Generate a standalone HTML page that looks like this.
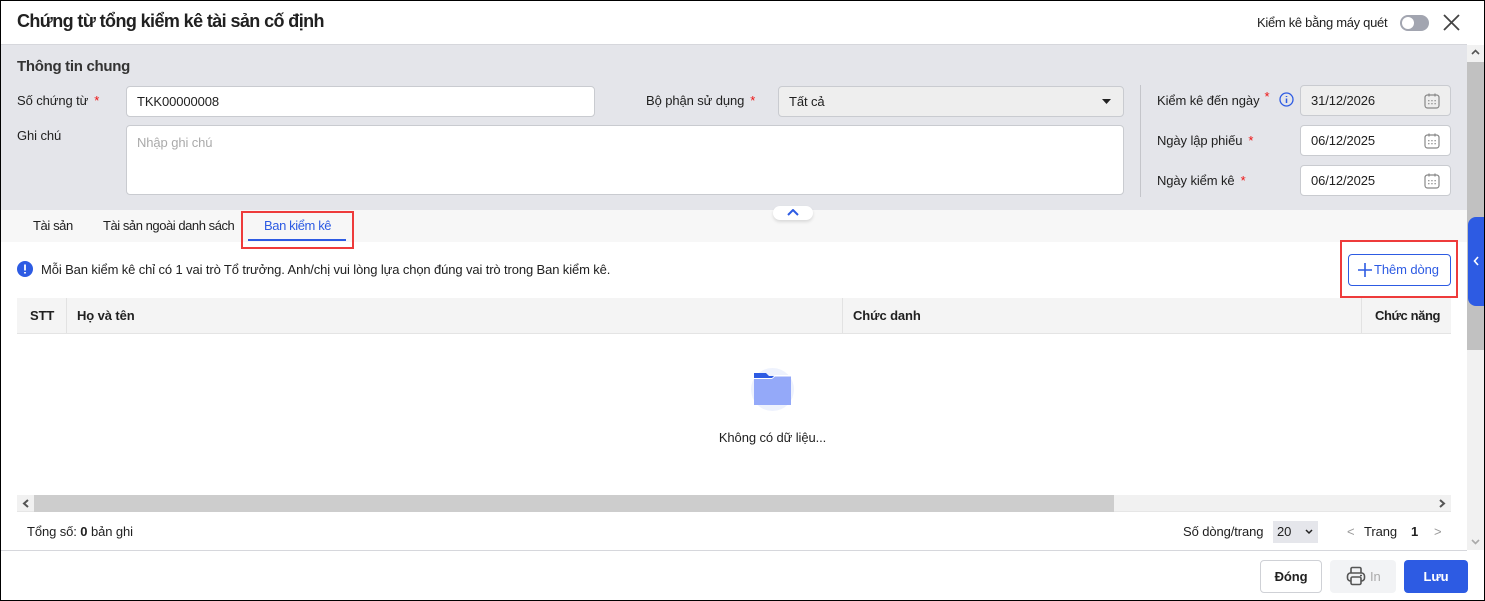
<!DOCTYPE html>
<html><head><meta charset="utf-8">
<style>
*{box-sizing:border-box;margin:0;padding:0}
body{width:1485px;height:601px;overflow:hidden;background:#fff;font-family:"Liberation Sans",Arial,sans-serif;font-size:13px;letter-spacing:-0.1px;color:#212121;position:relative}
.a{position:absolute}
.frame{position:absolute;left:0;top:0;width:1485px;height:601px;border:1px solid #000;pointer-events:none;z-index:50}
.inp{position:absolute;background:#fff;border:1px solid #c9cbd0;border-radius:4px;padding-left:10px;line-height:29px;font-size:13px}
.req{color:#e11;margin-left:6px}
.lbl{position:absolute;font-size:13px}
.cal{position:absolute;right:10px;top:7px;width:16px;height:16px}
</style></head><body>
<div class="frame"></div>
<div class="a" style="left:17px;top:11px;font-size:18px;font-weight:bold;letter-spacing:-0.6px">Chứng từ tổng kiểm kê tài sản cố định</div>
<div class="a" style="left:1257px;top:15px;font-size:13px;letter-spacing:-0.3px">Kiểm kê bằng máy quét</div>
<div class="a" style="left:1400px;top:15px;width:29px;height:16px;border-radius:8px;background:#a2a5b0"><div style="position:absolute;left:2px;top:2px;width:12px;height:12px;border-radius:50%;background:#fff"></div></div>
<svg class="a" style="left:1443px;top:14px" width="17" height="17" viewBox="0 0 17 17"><path d="M1 1L16 16M16 1L1 16" stroke="#444" stroke-width="1.8"/></svg>
<div class="a" style="left:0;top:44px;width:1467px;height:1px;background:#d6d7dc"></div>
<div class="a" style="left:0;top:45px;width:1467px;height:165px;background:#e4e5ea"></div>
<div class="a" style="left:17px;top:58px;font-size:15px;font-weight:bold;color:#333;letter-spacing:-0.3px">Thông tin chung</div>
<div class="lbl" style="left:17px;top:93px">Số chứng từ<span class="req">*</span></div>
<div class="inp" style="left:126px;top:86px;width:469px;height:31px">TKK00000008</div>
<div class="lbl" style="left:17px;top:128px">Ghi chú</div>
<div class="inp" style="left:126px;top:125px;width:998px;height:70px;line-height:34px;color:#aaa">Nhập ghi chú</div>
<div class="lbl" style="left:646px;top:93px">Bộ phận sử dụng<span class="req">*</span></div>
<div class="inp" style="left:778px;top:86px;width:346px;height:31px;background:#eeeeee">Tất cả</div>
<svg class="a" style="left:1102px;top:99px" width="9" height="6"><path d="M0 0H9L4.5 5Z" fill="#222"/></svg>
<div class="a" style="left:1140px;top:85px;width:1px;height:112px;background:#c4c5ca"></div>
<div class="lbl" style="left:1157px;top:93px">Kiểm kê đến ngày<span style="color:#e11;margin-left:5px;position:relative;top:-4px">*</span></div>
<svg class="a" style="left:1279px;top:92px" width="15" height="15" viewBox="0 0 15 15"><circle cx="7.5" cy="7.5" r="6.5" fill="none" stroke="#2d5be3" stroke-width="1.3"/><path d="M7.5 6.5V11M7.5 4V5" stroke="#2d5be3" stroke-width="1.5"/></svg>
<div class="inp" style="left:1300px;top:85px;width:151px;height:31px;background:#eeeeee">31/12/2026<svg class="cal" viewBox="0 0 16 16"><rect x="1" y="2" width="14" height="13" rx="2.5" fill="none" stroke="#888" stroke-width="1.2"/><path d="M5 0.5V3.5M11 0.5V3.5" stroke="#888" stroke-width="1.2"/><g fill="#999"><rect x="4" y="7" width="1.5" height="1.3"/><rect x="7.2" y="7" width="1.5" height="1.3"/><rect x="10.4" y="7" width="1.5" height="1.3"/><rect x="4" y="10" width="1.5" height="1.3"/><rect x="7.2" y="10" width="1.5" height="1.3"/><rect x="10.4" y="10" width="1.5" height="1.3"/></g></svg></div>
<div class="lbl" style="left:1157px;top:133px">Ngày lập phiếu<span class="req">*</span></div>
<div class="inp" style="left:1300px;top:125px;width:151px;height:31px">06/12/2025<svg class="cal" viewBox="0 0 16 16"><rect x="1" y="2" width="14" height="13" rx="2.5" fill="none" stroke="#888" stroke-width="1.2"/><path d="M5 0.5V3.5M11 0.5V3.5" stroke="#888" stroke-width="1.2"/><g fill="#999"><rect x="4" y="7" width="1.5" height="1.3"/><rect x="7.2" y="7" width="1.5" height="1.3"/><rect x="10.4" y="7" width="1.5" height="1.3"/><rect x="4" y="10" width="1.5" height="1.3"/><rect x="7.2" y="10" width="1.5" height="1.3"/><rect x="10.4" y="10" width="1.5" height="1.3"/></g></svg></div>
<div class="lbl" style="left:1157px;top:173px">Ngày kiểm kê<span class="req">*</span></div>
<div class="inp" style="left:1300px;top:165px;width:151px;height:31px">06/12/2025<svg class="cal" viewBox="0 0 16 16"><rect x="1" y="2" width="14" height="13" rx="2.5" fill="none" stroke="#888" stroke-width="1.2"/><path d="M5 0.5V3.5M11 0.5V3.5" stroke="#888" stroke-width="1.2"/><g fill="#999"><rect x="4" y="7" width="1.5" height="1.3"/><rect x="7.2" y="7" width="1.5" height="1.3"/><rect x="10.4" y="7" width="1.5" height="1.3"/><rect x="4" y="10" width="1.5" height="1.3"/><rect x="7.2" y="10" width="1.5" height="1.3"/><rect x="10.4" y="10" width="1.5" height="1.3"/></g></svg></div>
<div class="a" style="left:0;top:210px;width:1467px;height:32px;background:#f7f7f7"></div>
<div class="a" style="left:773px;top:206px;width:40px;height:14px;background:#fff;border-radius:7px;box-shadow:0 2px 3px rgba(0,0,0,.12)"><svg style="position:absolute;left:14px;top:3px" width="12" height="7"><path d="M1 6L6 1L11 6" fill="none" stroke="#2d5be3" stroke-width="2"/></svg></div>
<div class="a" style="left:33px;top:218px;letter-spacing:-0.4px">Tài sản</div>
<div class="a" style="left:103px;top:218px;letter-spacing:-0.45px">Tài sản ngoài danh sách</div>
<div class="a" style="left:264px;top:218px;color:#2d5be3;letter-spacing:-0.4px">Ban kiểm kê</div>
<div class="a" style="left:248px;top:239px;width:98px;height:2px;background:#2d5be3"></div>
<div class="a" style="left:241px;top:211px;width:113px;height:38px;border:2px solid #ee3b3b"></div>
<svg class="a" style="left:17px;top:261px" width="16" height="16"><circle cx="8" cy="8" r="8" fill="#2d5be3"/><path d="M8 3.5V9.5M8 11V12.5" stroke="#fff" stroke-width="1.8"/></svg>
<div class="a" style="left:41px;top:262px;letter-spacing:-0.12px">Mỗi Ban kiểm kê chỉ có 1 vai trò Tổ trưởng. Anh/chị vui lòng lựa chọn đúng vai trò trong Ban kiểm kê.</div>
<div class="a" style="left:1348px;top:254px;width:103px;height:32px;border:1px solid #2d5be3;border-radius:4px;color:#2d5be3;font-size:13px;line-height:30px;padding-left:25px">Thêm dòng</div>
<svg class="a" style="left:1358px;top:263px" width="14" height="14"><path d="M7 0V14M0 7H14" stroke="#2d5be3" stroke-width="1.6"/></svg>
<div class="a" style="left:1340px;top:240px;width:118px;height:58px;border:2px solid #ee3b3b"></div>
<div class="a" style="left:17px;top:298px;width:1434px;height:36px;background:#f4f4f4;border-bottom:1px solid #e4e4e4"></div>
<div class="a" style="left:66px;top:298px;width:1px;height:35px;background:#e2e2e2"></div>
<div class="a" style="left:842px;top:298px;width:1px;height:35px;background:#e2e2e2"></div>
<div class="a" style="left:1361px;top:298px;width:1px;height:35px;background:#e2e2e2"></div>
<div class="a" style="left:30px;top:308px;font-weight:bold">STT</div>
<div class="a" style="left:77px;top:308px;font-weight:bold">Họ và tên</div>
<div class="a" style="left:853px;top:308px;font-weight:bold">Chức danh</div>
<div class="a" style="left:1375px;top:308px;font-weight:bold;letter-spacing:-0.4px">Chức năng</div>
<div class="a" style="left:751px;top:368px;width:43px;height:43px;border-radius:50%;background:#eef2fd"></div>
<svg class="a" style="left:754px;top:373px" width="37" height="32" viewBox="0 0 37 32"><path d="M0 0H12L15 3H37V8H0Z" fill="#2d5be3"/><path d="M0 5H18L21 2H37V32H0Z" fill="#fff"/><path d="M0 6H18L21 3.5H37V32H0Z" fill="#94a9f9"/></svg>
<div class="a" style="left:0;top:430px;width:1545px;text-align:center">Không có dữ liệu...</div>
<div class="a" style="left:17px;top:495px;width:1434px;height:17px;background:#f1f1f1;border-bottom:1px solid #e6e6e6"></div>
<div class="a" style="left:34px;top:495px;width:1080px;height:17px;background:#cdcdcd"></div>
<svg class="a" style="left:22px;top:499px" width="8" height="9"><path d="M6 1L2 4.5L6 8" fill="none" stroke="#555" stroke-width="2"/></svg>
<svg class="a" style="left:1438px;top:499px" width="8" height="9"><path d="M2 1L6 4.5L2 8" fill="none" stroke="#555" stroke-width="2"/></svg>
<div class="a" style="left:27px;top:524px">Tổng số: <b>0</b> bản ghi</div>
<div class="a" style="left:1183px;top:524px">Số dòng/trang</div>
<div class="a" style="left:1273px;top:521px;width:45px;height:22px;background:#e5e6eb;padding-left:4px;line-height:22px">20</div>
<svg class="a" style="left:1305px;top:529px" width="8" height="6"><path d="M1 1L4 4L7 1" fill="none" stroke="#222" stroke-width="1.5"/></svg>
<div class="a" style="left:1347px;top:524px;color:#999">&lt;</div>
<div class="a" style="left:1364px;top:524px">Trang</div>
<div class="a" style="left:1411px;top:524px;font-weight:bold">1</div>
<div class="a" style="left:1434px;top:524px;color:#999">&gt;</div>
<div class="a" style="left:0;top:550px;width:1467px;height:1px;background:#d6d7dc"></div>
<div class="a" style="left:1260px;top:560px;width:62px;height:33px;border:1px solid #cfd1d6;border-radius:4px;text-align:center;line-height:31px;font-weight:bold">Đóng</div>
<div class="a" style="left:1330px;top:560px;width:66px;height:33px;background:#f2f3f5;border-radius:4px;color:#aaa;line-height:33px;padding-left:40px">In</div>
<svg class="a" style="left:1346px;top:566px" width="20" height="20" viewBox="0 0 20 20"><path d="M5 7V3Q5 1.5 6.5 1.5H13.5Q15 1.5 15 3V7" fill="none" stroke="#555" stroke-width="1.6"/><rect x="1.5" y="7" width="17" height="8" rx="3" fill="none" stroke="#555" stroke-width="1.6"/><rect x="5" y="11" width="10" height="7.5" rx="1.5" fill="#f2f3f5" stroke="#555" stroke-width="1.6"/><path d="M14 9.5H16" stroke="#555" stroke-width="1.4"/></svg>
<div class="a" style="left:1404px;top:560px;width:64px;height:33px;background:#2d5be3;border-radius:4px;color:#fff;text-align:center;line-height:33px;font-weight:bold">Lưu</div>
<div class="a" style="left:1467px;top:45px;width:17px;height:505px;background:#f1f1f1"></div>
<div class="a" style="left:1467px;top:62px;width:17px;height:288px;background:#c1c1c1"></div>
<svg class="a" style="left:1471px;top:49px" width="9" height="6"><path d="M1 5L4.5 1.5L8 5" fill="none" stroke="#555" stroke-width="1.6"/></svg>
<svg class="a" style="left:1471px;top:539px" width="9" height="6"><path d="M1 1L4.5 4.5L8 1" fill="none" stroke="#aaa" stroke-width="1.6"/></svg>
<div class="a" style="left:1468px;top:217px;width:17px;height:89px;background:#2d5be3;border-radius:8px 0 0 8px"></div>
<svg class="a" style="left:1473px;top:256px" width="6" height="10"><path d="M5 1L1.5 5L5 9" fill="none" stroke="#fff" stroke-width="1.6"/></svg>
</body></html>
